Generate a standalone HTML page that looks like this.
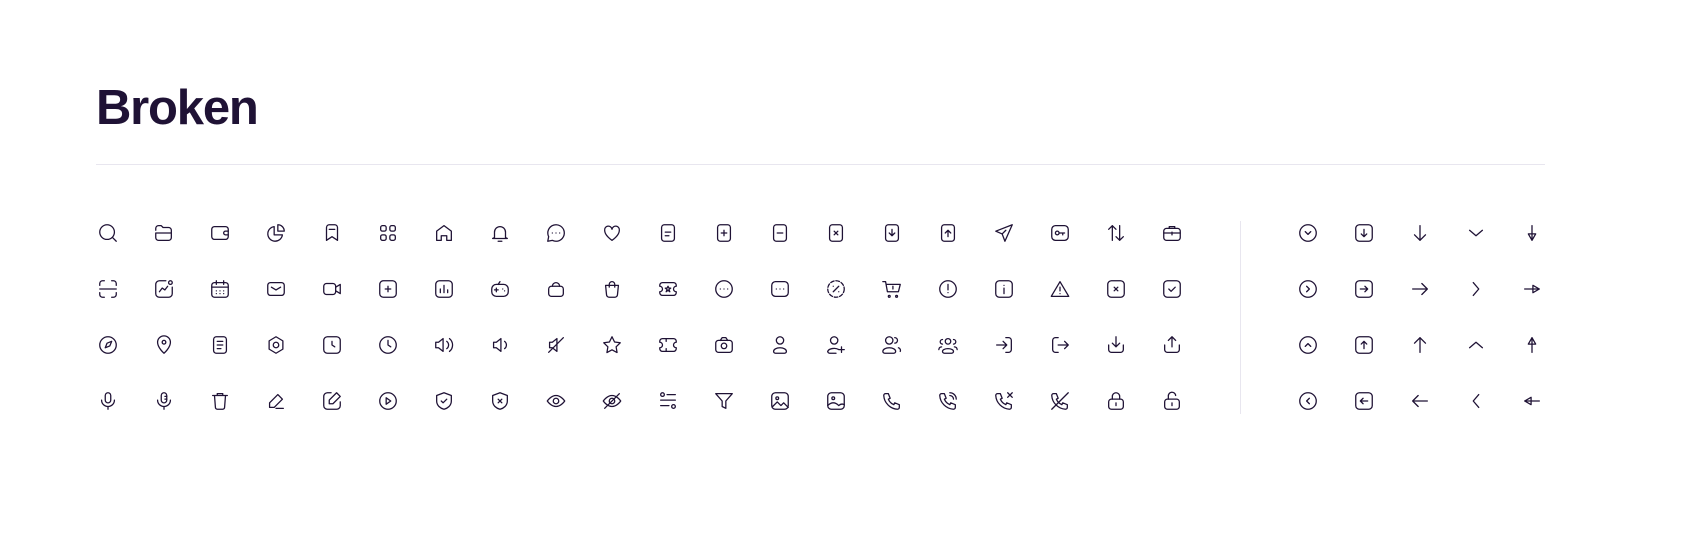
<!DOCTYPE html>
<html><head><meta charset="utf-8"><style>
html,body{margin:0;padding:0;background:#fff;width:1688px;height:552px;overflow:hidden;font-family:"Liberation Sans",sans-serif}
h1{position:absolute;left:96px;top:78px;margin:0;font-size:49px;font-weight:700;color:#1f1235;letter-spacing:-1.2px;line-height:60px}
.hr{position:absolute;left:96px;top:164px;width:1449px;height:1px;background:#e8e6ef}
.vr{position:absolute;left:1240px;top:221px;width:1px;height:193px;background:#e8e6ef}
.g{position:absolute;display:grid;gap:32px}
.g1{left:96px;top:221px;grid-template-columns:repeat(20,24px)}
.g2{left:1296px;top:221px;grid-template-columns:repeat(5,24px)}
svg{width:22px;height:22px;margin:1px;fill:none;stroke:#1f1235;stroke-width:1.4;stroke-linecap:round;stroke-linejoin:round;display:block}
</style></head><body>
<h1>Broken</h1>
<div class="hr"></div>
<div class="vr"></div>
<div class="g g1">
<svg viewBox="0 0 24 24"><circle cx="11" cy="11" r="8"/><path d="M17 17l4 4"/></svg>
<svg viewBox="0 0 24 24"><path d="M3 9V7a3 3 0 0 1 3-3h3l2 2h6a3 3 0 0 1 3 3v8a3 3 0 0 1-3 3H6a3 3 0 0 1-3-3v-5h17"/></svg>
<svg viewBox="0 0 24 24"><rect x="3" y="5" width="18" height="14" rx="3"/><path d="M21 10h-3a2 2 0 0 0 0 4h3"/></svg>
<svg viewBox="0 0 24 24"><path d="M10 5a8 8 0 1 0 9 9h-9z"/><path d="M14 3a7 7 0 0 1 7 7h-7z"/></svg>
<svg viewBox="0 0 24 24"><path d="M6 20V6a3 3 0 0 1 3-3h6a3 3 0 0 1 3 3v14l-6-4z"/><path d="M9 8h6"/></svg>
<svg viewBox="0 0 24 24"><rect x="4" y="4" width="6" height="6" rx="2"/><rect x="14" y="4" width="6" height="6" rx="2"/><rect x="4" y="14" width="6" height="6" rx="2"/><rect x="14" y="14" width="6" height="6" rx="2"/></svg>
<svg viewBox="0 0 24 24"><path d="M4 20V10l8-6 8 6v10h-5v-5h-6v5z"/></svg>
<svg viewBox="0 0 24 24"><path d="M6 17v-6a6 6 0 0 1 12 0v6l2 1H4z"/><path d="M10 21h4"/></svg>
<svg viewBox="0 0 24 24"><path d="M12 21a9 9 0 1 0-8-5l-1 5 5-1a9 9 0 0 0 4 1z"/><path d="M8 12h.01M12 12h.01M16 12h.01"/></svg>
<svg viewBox="0 0 24 24"><path d="M12 20s-8-5-8-11a4 4 0 0 1 8-1 4 4 0 0 1 8 1c0 6-8 11-8 11z"/></svg>
<svg viewBox="0 0 24 24"><rect x="5" y="3" width="14" height="18" rx="3"/><path d="M9 11h6M9 15h4"/></svg>
<svg viewBox="0 0 24 24"><rect x="5" y="3" width="14" height="18" rx="3"/><path d="M9 12h6M12 9v6"/></svg>
<svg viewBox="0 0 24 24"><rect x="5" y="3" width="14" height="18" rx="3"/><path d="M9 12h6"/></svg>
<svg viewBox="0 0 24 24"><rect x="5" y="3" width="14" height="18" rx="3"/><path d="M10 10l4 4M14 10l-4 4"/></svg>
<svg viewBox="0 0 24 24"><rect x="5" y="3" width="14" height="18" rx="3"/><path d="M12 8v7M9 12l3 3 3-3"/></svg>
<svg viewBox="0 0 24 24"><rect x="5" y="3" width="14" height="18" rx="3"/><path d="M12 16V9M9 12l3-3 3 3"/></svg>
<svg viewBox="0 0 24 24"><path d="M21 3L3 10l7 3 3 8z"/><path d="M10 13l4-4"/></svg>
<svg viewBox="0 0 24 24"><rect x="3" y="4" width="18" height="16" rx="4"/><circle cx="9" cy="12" r="2"/><path d="M11 12h6M15 12v2"/></svg>
<svg viewBox="0 0 24 24"><path d="M8 20V4M4 8l4-4 4 4M16 4v16M12 16l4 4 4-4"/></svg>
<svg viewBox="0 0 24 24"><rect x="3" y="7" width="18" height="13" rx="3"/><path d="M9 7V5h6v2M3 12h18M12 11v3"/></svg>
<svg viewBox="0 0 24 24"><path d="M3 8V6a3 3 0 0 1 3-3h2M16 3h2a3 3 0 0 1 3 3v2M21 16v2a3 3 0 0 1-3 3h-2M8 21H6a3 3 0 0 1-3-3v-2M3 12h18"/></svg>
<svg viewBox="0 0 24 24"><path d="M14 3H7a4 4 0 0 0-4 4v10a4 4 0 0 0 4 4h10a4 4 0 0 0 4-4v-7"/><path d="M7 15l3-4 3 2 3-4"/><circle cx="19" cy="5" r="2"/></svg>
<svg viewBox="0 0 24 24"><rect x="3" y="5" width="18" height="16" rx="3"/><path d="M8 3v4M16 3v4M3 10h18M8 14h.01M12 14h.01M16 14h.01M8 17h.01M12 17h.01M16 17h.01"/></svg>
<svg viewBox="0 0 24 24"><rect x="3" y="5" width="18" height="14" rx="3"/><path d="M7 10l5 3 5-3"/></svg>
<svg viewBox="0 0 24 24"><rect x="3" y="6" width="13" height="12" rx="3"/><path d="M16 10l5-3v10l-5-3"/></svg>
<svg viewBox="0 0 24 24"><rect x="3" y="3" width="18" height="18" rx="4"/><path d="M9 12h6M12 9v6"/></svg>
<svg viewBox="0 0 24 24"><rect x="3" y="3" width="18" height="18" rx="4"/><path d="M8 16v-4M12 16V8M16 16v-3"/></svg>
<svg viewBox="0 0 24 24"><rect x="3" y="7" width="18" height="13" rx="5"/><path d="M6 13h4M8 11v4M15 12h.01M17 14h.01M10 7l2-3"/></svg>
<svg viewBox="0 0 24 24"><rect x="4" y="9" width="16" height="11" rx="3"/><path d="M8 9a4 4 0 0 1 8 0"/></svg>
<svg viewBox="0 0 24 24"><path d="M5 8h14l-1 10a3 3 0 0 1-3 3H9a3 3 0 0 1-3-3z"/><path d="M9 10V7a3 3 0 0 1 6 0v3"/></svg>
<svg viewBox="0 0 24 24"><path d="M6 5h12a3 3 0 0 1 3 3v1a3 3 0 0 0 0 6v1a3 3 0 0 1-3 3H6a3 3 0 0 1-3-3v-1a3 3 0 0 0 0-6V8a3 3 0 0 1 3-3z"/><path d="M12 9l1 2h2l-2 1.5 1 2.5-2-1.5-2 1.5 1-2.5L9 11h2z"/></svg>
<svg viewBox="0 0 24 24"><circle cx="12" cy="12" r="9"/><path d="M8 12h.01M12 12h.01M16 12h.01"/></svg>
<svg viewBox="0 0 24 24"><rect x="3" y="4" width="18" height="16" rx="4"/><path d="M8 12h.01M12 12h.01M16 12h.01"/></svg>
<svg viewBox="0 0 24 24"><circle cx="12" cy="12" r="9" stroke-dasharray="4 2"/><path d="M9 15l6-6M9 9h.01M15 15h.01"/></svg>
<svg viewBox="0 0 24 24"><path d="M2 4h3l2 11h12l2-8H6"/><circle cx="9" cy="20" r="1"/><circle cx="17" cy="20" r="1"/><path d="M13 9v3"/></svg>
<svg viewBox="0 0 24 24"><circle cx="12" cy="12" r="9"/><path d="M12 7v6M12 16h.01"/></svg>
<svg viewBox="0 0 24 24"><rect x="3" y="3" width="18" height="18" rx="4"/><path d="M12 11v6M12 8h.01"/></svg>
<svg viewBox="0 0 24 24"><path d="M12 4L2.5 20h19z"/><path d="M12 10v4M12 17h.01"/></svg>
<svg viewBox="0 0 24 24"><rect x="3" y="3" width="18" height="18" rx="4"/><path d="M10 10l4 4M14 10l-4 4"/></svg>
<svg viewBox="0 0 24 24"><rect x="3" y="3" width="18" height="18" rx="4"/><path d="M8.5 12l2.5 2.5 4.5-4.5"/></svg>
<svg viewBox="0 0 24 24"><circle cx="12" cy="12" r="9"/><path d="M9 15l2-5 5-2-2 5z"/></svg>
<svg viewBox="0 0 24 24"><path d="M12 21s-7-6-7-12a7 7 0 0 1 14 0c0 6-7 12-7 12z"/><circle cx="12" cy="9" r="2"/></svg>
<svg viewBox="0 0 24 24"><rect x="5" y="3" width="14" height="18" rx="3"/><path d="M9 8h6M9 12h6M9 16h4"/></svg>
<svg viewBox="0 0 24 24"><path d="M12 3l7.5 4.5v9L12 21l-7.5-4.5v-9z"/><circle cx="12" cy="12" r="3"/></svg>
<svg viewBox="0 0 24 24"><rect x="3" y="3" width="18" height="18" rx="4"/><path d="M12 8v4l3 2"/></svg>
<svg viewBox="0 0 24 24"><circle cx="12" cy="12" r="9"/><path d="M12 7v5l3 2"/></svg>
<svg viewBox="0 0 24 24"><path d="M3 9h3l5-4v14l-5-4H3z"/><path d="M15 8a5 5 0 0 1 0 8M18 5a9 9 0 0 1 0 14"/></svg>
<svg viewBox="0 0 24 24"><path d="M5 9h3l5-4v14l-5-4H5z"/><path d="M17 8a5 5 0 0 1 0 8"/></svg>
<svg viewBox="0 0 24 24"><path d="M5 9h3l5-4v14l-5-4H5z"/><path d="M4 20L20 4"/></svg>
<svg viewBox="0 0 24 24"><path d="M12 3l2.8 5.7 6.2.9-4.5 4.4 1 6.2-5.5-2.9-5.5 2.9 1-6.2L3 9.6l6.2-.9z"/></svg>
<svg viewBox="0 0 24 24"><path d="M6 5h12a3 3 0 0 1 3 3v1a3 3 0 0 0 0 6v1a3 3 0 0 1-3 3H6a3 3 0 0 1-3-3v-1a3 3 0 0 0 0-6V8a3 3 0 0 1 3-3z"/><path d="M10 5v3M10 16v3"/></svg>
<svg viewBox="0 0 24 24"><rect x="3" y="7" width="18" height="13" rx="3"/><path d="M8 7l2-3h4l2 3"/><circle cx="12" cy="13" r="3"/></svg>
<svg viewBox="0 0 24 24"><circle cx="12" cy="7" r="4"/><path d="M5 19a7 4 0 0 1 14 0 2 2 0 0 1-2 2H7a2 2 0 0 1-2-2z"/></svg>
<svg viewBox="0 0 24 24"><circle cx="10" cy="7" r="4"/><path d="M3 19a7 4 0 0 1 12-2M18 14v6M15 17h6"/><path d="M3 19a2 2 0 0 0 2 2h7"/></svg>
<svg viewBox="0 0 24 24"><circle cx="9" cy="7" r="4"/><path d="M2 19a7 4 0 0 1 14 0 2 2 0 0 1-2 2H4a2 2 0 0 1-2-2zM15 4a3 3 0 0 1 0 6M19 15a3 3 0 0 1 2 4"/></svg>
<svg viewBox="0 0 24 24"><circle cx="12" cy="8" r="3"/><path d="M6 19a6 3 0 0 1 12 0 2 2 0 0 1-2 2H8a2 2 0 0 1-2-2zM6 6a2.5 2.5 0 0 0 0 5M18 6a2.5 2.5 0 0 1 0 5M2 17a3 3 0 0 1 3-3M22 17a3 3 0 0 0-3-3"/></svg>
<svg viewBox="0 0 24 24"><path d="M14 4h3a3 3 0 0 1 3 3v10a3 3 0 0 1-3 3h-3M4 12h11M11 8l4 4-4 4"/></svg>
<svg viewBox="0 0 24 24"><path d="M10 4H7a3 3 0 0 0-3 3v10a3 3 0 0 0 3 3h3M10 12h11M17 8l4 4-4 4"/></svg>
<svg viewBox="0 0 24 24"><path d="M12 3v11M8 10l4 4 4-4M4 12v5a3 3 0 0 0 3 3h10a3 3 0 0 0 3-3v-5"/></svg>
<svg viewBox="0 0 24 24"><path d="M12 14V3M8 7l4-4 4 4M4 12v5a3 3 0 0 0 3 3h10a3 3 0 0 0 3-3v-5"/></svg>
<svg viewBox="0 0 24 24"><rect x="9" y="3" width="6" height="11" rx="3"/><path d="M5 11a7 7 0 0 0 14 0M12 18v3"/></svg>
<svg viewBox="0 0 24 24"><rect x="9" y="3" width="6" height="11" rx="3"/><path d="M5 11a7 7 0 0 0 14 0M12 18v3M13 7h2M13 10h2"/></svg>
<svg viewBox="0 0 24 24"><path d="M4 6h16M9 6V4h6v2M6 6l1 13a2 2 0 0 0 2 2h6a2 2 0 0 0 2-2l1-13"/></svg>
<svg viewBox="0 0 24 24"><path d="M14 5l5 5-9 9H5v-5zM12 20h8"/></svg>
<svg viewBox="0 0 24 24"><path d="M11 3H7a4 4 0 0 0-4 4v10a4 4 0 0 0 4 4h10a4 4 0 0 0 4-4v-4"/><path d="M17 3l4 4-8 8H9v-4z"/></svg>
<svg viewBox="0 0 24 24"><circle cx="12" cy="12" r="9"/><path d="M10 8.5l5 3.5-5 3.5z"/></svg>
<svg viewBox="0 0 24 24"><path d="M12 3l8 3v6c0 5-4 8-8 9-4-1-8-4-8-9V6z"/><path d="M9 12l2 2 4-4"/></svg>
<svg viewBox="0 0 24 24"><path d="M12 3l8 3v6c0 5-4 8-8 9-4-1-8-4-8-9V6z"/><path d="M10 10l4 4M14 10l-4 4"/></svg>
<svg viewBox="0 0 24 24"><path d="M2.5 12s4-6 9.5-6 9.5 6 9.5 6-4 6-9.5 6-9.5-6-9.5-6z"/><circle cx="12" cy="12" r="3"/></svg>
<svg viewBox="0 0 24 24"><path d="M2.5 12s4-6 9.5-6 9.5 6 9.5 6-4 6-9.5 6-9.5-6-9.5-6z"/><circle cx="12" cy="12" r="3"/><path d="M4 20L20 4"/></svg>
<svg viewBox="0 0 24 24"><circle cx="6" cy="5" r="2"/><path d="M11 5h9M4 17h9"/><circle cx="18" cy="18" r="2"/><path d="M4 11h16"/></svg>
<svg viewBox="0 0 24 24"><path d="M3 4h18l-7 8v8l-4-2v-6z"/></svg>
<svg viewBox="0 0 24 24"><rect x="3" y="3" width="18" height="18" rx="4"/><circle cx="9" cy="9" r="1.5"/><path d="M4 18l5-5 4 4 3-3 5 5"/></svg>
<svg viewBox="0 0 24 24"><rect x="3" y="3" width="18" height="18" rx="4"/><circle cx="9" cy="9" r="1.5"/><path d="M3 17c4-4 8-4 12 0 2-2 4-2 6-1"/></svg>
<svg viewBox="0 0 24 24"><path d="M5 4h3l2 5-2 1a11 11 0 0 0 6 6l1-2 5 2v3a2 2 0 0 1-2 2A16 16 0 0 1 3 6a2 2 0 0 1 2-2z"/></svg>
<svg viewBox="0 0 24 24"><path d="M5 4h3l2 5-2 1a11 11 0 0 0 6 6l1-2 5 2v3a2 2 0 0 1-2 2A16 16 0 0 1 3 6a2 2 0 0 1 2-2z"/><path d="M14 3a7 7 0 0 1 7 7M14 6a4 4 0 0 1 4 4"/></svg>
<svg viewBox="0 0 24 24"><path d="M5 4h3l2 5-2 1a11 11 0 0 0 6 6l1-2 5 2v3a2 2 0 0 1-2 2A16 16 0 0 1 3 6a2 2 0 0 1 2-2z"/><path d="M16 3l5 5M21 3l-5 5"/></svg>
<svg viewBox="0 0 24 24"><path d="M5 4h3l2 5-2 1a11 11 0 0 0 6 6l1-2 5 2v3a2 2 0 0 1-2 2A16 16 0 0 1 3 6a2 2 0 0 1 2-2z"/><path d="M3 21L21 3"/></svg>
<svg viewBox="0 0 24 24"><rect x="4" y="10" width="16" height="11" rx="3"/><path d="M8 10V7a4 4 0 0 1 8 0v3M12 14v3"/></svg>
<svg viewBox="0 0 24 24"><rect x="4" y="10" width="16" height="11" rx="3"/><path d="M8 10V7a4 4 0 0 1 8-1M12 14v3"/></svg>
</div>
<div class="g g2">
<svg viewBox="0 0 24 24"><circle cx="12" cy="12" r="9"/><path d="M9 10.5l3 3 3-3"/></svg>
<svg viewBox="0 0 24 24"><rect x="3" y="3" width="18" height="18" rx="4"/><path d="M12 8v8M9 13l3 3 3-3"/></svg>
<svg viewBox="0 0 24 24"><path d="M12 4v16M6 14l6 6 6-6"/></svg>
<svg viewBox="0 0 24 24"><path d="M5 9l7 6 7-6"/></svg>
<svg viewBox="0 0 24 24"><path d="M12 4v16M8 13h8l-4 7z"/></svg>
<svg viewBox="0 0 24 24" style="transform:rotate(-90deg)"><circle cx="12" cy="12" r="9"/><path d="M9 10.5l3 3 3-3"/></svg>
<svg viewBox="0 0 24 24" style="transform:rotate(-90deg)"><rect x="3" y="3" width="18" height="18" rx="4"/><path d="M12 8v8M9 13l3 3 3-3"/></svg>
<svg viewBox="0 0 24 24" style="transform:rotate(-90deg)"><path d="M12 4v16M6 14l6 6 6-6"/></svg>
<svg viewBox="0 0 24 24" style="transform:rotate(-90deg)"><path d="M5 9l7 6 7-6"/></svg>
<svg viewBox="0 0 24 24" style="transform:rotate(-90deg)"><path d="M12 4v16M8 13h8l-4 7z"/></svg>
<svg viewBox="0 0 24 24" style="transform:rotate(180deg)"><circle cx="12" cy="12" r="9"/><path d="M9 10.5l3 3 3-3"/></svg>
<svg viewBox="0 0 24 24" style="transform:rotate(180deg)"><rect x="3" y="3" width="18" height="18" rx="4"/><path d="M12 8v8M9 13l3 3 3-3"/></svg>
<svg viewBox="0 0 24 24" style="transform:rotate(180deg)"><path d="M12 4v16M6 14l6 6 6-6"/></svg>
<svg viewBox="0 0 24 24" style="transform:rotate(180deg)"><path d="M5 9l7 6 7-6"/></svg>
<svg viewBox="0 0 24 24" style="transform:rotate(180deg)"><path d="M12 4v16M8 13h8l-4 7z"/></svg>
<svg viewBox="0 0 24 24" style="transform:rotate(90deg)"><circle cx="12" cy="12" r="9"/><path d="M9 10.5l3 3 3-3"/></svg>
<svg viewBox="0 0 24 24" style="transform:rotate(90deg)"><rect x="3" y="3" width="18" height="18" rx="4"/><path d="M12 8v8M9 13l3 3 3-3"/></svg>
<svg viewBox="0 0 24 24" style="transform:rotate(90deg)"><path d="M12 4v16M6 14l6 6 6-6"/></svg>
<svg viewBox="0 0 24 24" style="transform:rotate(90deg)"><path d="M5 9l7 6 7-6"/></svg>
<svg viewBox="0 0 24 24" style="transform:rotate(90deg)"><path d="M12 4v16M8 13h8l-4 7z"/></svg>
</div>
</body></html>
